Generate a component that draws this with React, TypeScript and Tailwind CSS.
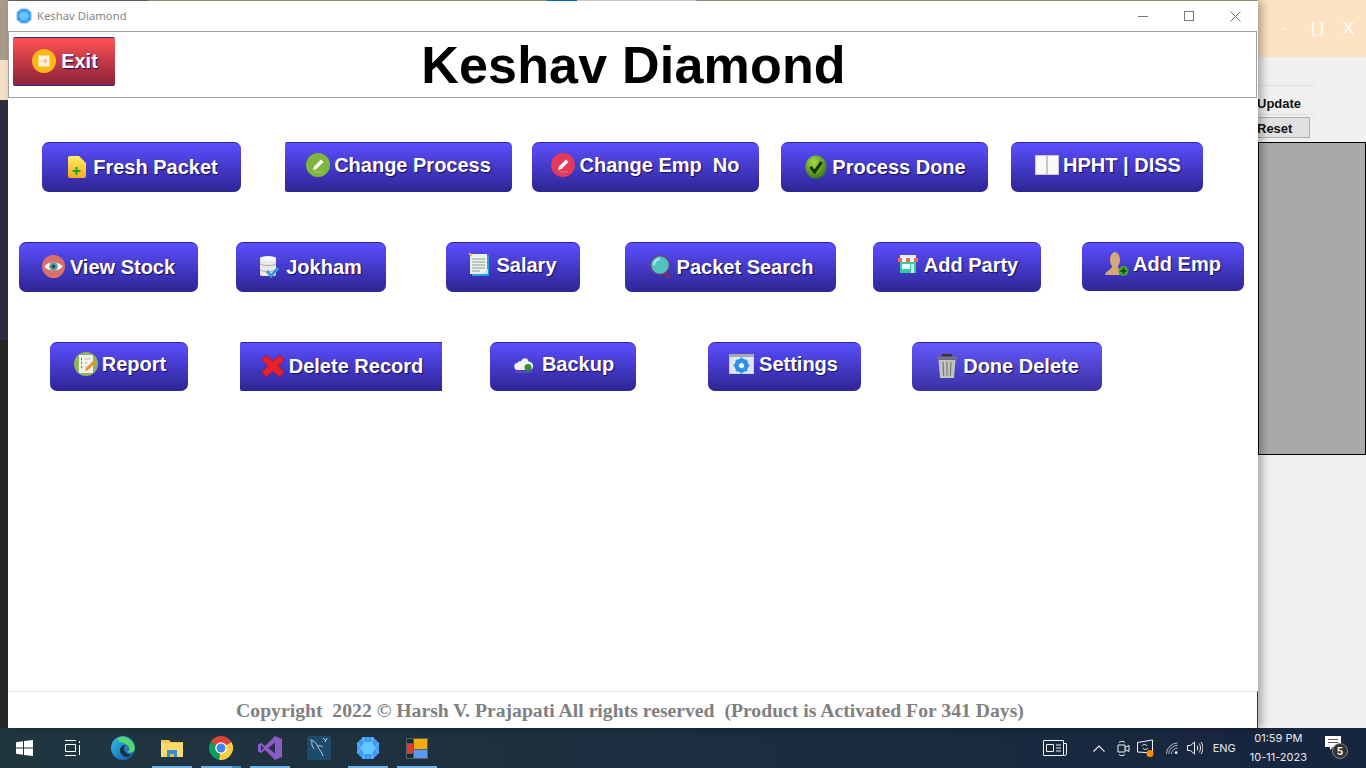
import type { ReactNode } from 'react';

const Diamond = ({ size = 16 }: { size?: number }) => (
  <svg width={size} height={size} viewBox="0 0 24 24">
    <polygon points="7,1 17,1 23,7 23,17 17,23 7,23 1,17 1,7" fill="#3f9bf5" />
    <polygon points="8,6 16,6 19,12 16,18 8,18 5,12" fill="#62c8ff" />
    <path d="M7 1 8 6M17 1l-1 5M23 7l-4 5M23 17l-4-5M17 23l-1-5M7 23l1-5M1 17l4-5M1 7l4 5" stroke="#8fc4fa" strokeWidth="0.8" />
  </svg>
);

const ExitIcon = () => (
  <svg width="24" height="24" viewBox="0 0 24 24">
    <circle cx="12" cy="12" r="12" fill="#fdb813" />
    <rect x="6.5" y="6.5" width="11" height="11" fill="#fdf3df" />
    <path d="M9 12h5M12.5 10l2 2-2 2" stroke="#e8bd72" strokeWidth="1.2" fill="none" />
  </svg>
);

const FileIcon = () => (
  <svg width="18" height="22" viewBox="0 0 18 22">
    <defs>
      <linearGradient id="fp" x1="0" y1="0" x2="0" y2="1">
        <stop offset="0" stopColor="#fff06a" />
        <stop offset="1" stopColor="#fba81e" />
      </linearGradient>
    </defs>
    <path d="M2 0h9l7 7v13a2 2 0 0 1-2 2H2a2 2 0 0 1-2-2V2a2 2 0 0 1 2-2z" fill="url(#fp)" />
    <path d="M4.500 15h8M8.500 11v8" stroke="#19a32a" strokeWidth="2" />
  </svg>
);

const PencilCircle = ({ bg, w, h }: { bg: string; w: number; h: number }) => (
  <svg width={w} height={h} viewBox="0 0 24 24" preserveAspectRatio="none">
    <circle cx="12" cy="12" r="12" fill={bg} />
    <path d="M7 17l1-3.500 7-7 2.500 2.500-7 7z" fill="#fff" />
    <path d="M8 19h9" stroke="#ffffff" strokeOpacity="0.4" strokeWidth="0.8" />
  </svg>
);

const CheckIcon = () => (
  <svg width="22" height="24" viewBox="0 0 24 24" preserveAspectRatio="none">
    <defs>
      <radialGradient id="ck" cx="0.4" cy="0.3" r="0.8">
        <stop offset="0" stopColor="#a5dc3c" />
        <stop offset="1" stopColor="#2f6d12" />
      </radialGradient>
    </defs>
    <circle cx="12" cy="12" r="11.500" fill="url(#ck)" />
    <path d="M6 12l4.500 5L18 7" stroke="#12300a" strokeWidth="3" fill="none" />
  </svg>
);

const BookIcon = () => (
  <svg width="24" height="20" viewBox="0 0 24 20">
    <rect width="24" height="20" fill="#c9c9c9" />
    <rect x="1" y="1" width="10" height="18" fill="#fafafa" />
    <rect x="13" y="1" width="10" height="18" fill="#fafafa" />
  </svg>
);

const EyeIcon = () => (
  <svg width="23" height="23" viewBox="0 0 24 24">
    <circle cx="12" cy="12" r="12" fill="#d9716a" />
    <path d="M2.500 12C6 6.500 18 6.500 21.500 12 18 17.500 6 17.500 2.500 12z" fill="#f4f7f7" />
    <circle cx="12" cy="12" r="4.500" fill="#5fa0a8" />
    <circle cx="12" cy="12" r="2" fill="#25474d" />
  </svg>
);

const DbIcon = () => (
  <svg width="19" height="22" viewBox="0 0 19 22">
    <rect x="0" y="1" width="16" height="19" rx="2" fill="#e9e9e9" />
    <ellipse cx="8" cy="2.500" rx="8" ry="2.500" fill="#fafafa" />
    <path d="M0 8c3 2 13 2 16 0M0 14c3 2 13 2 16 0" stroke="#a9a9a9" fill="none" />
    <path d="M7 15l4 5 7-8" stroke="#3c9dd8" strokeWidth="3" fill="none" />
  </svg>
);

const NoteIcon = () => (
  <svg width="20" height="23" viewBox="0 0 20 23">
    <rect x="3" y="2" width="17" height="21" fill="#2c9fe0" />
    <rect x="1" y="1" width="17" height="20" fill="#eef2ee" />
    <path d="M3 6h13M3 9h13M3 12h13M3 15h13M3 18h8" stroke="#8a9a8a" />
    <path d="M0 0l3 3" stroke="#e3c33a" strokeWidth="2" />
    <path d="M14 21l5-5v5z" fill="#bfe6fa" />
  </svg>
);

const SearchIcon = () => (
  <svg width="22" height="24" viewBox="0 0 22 24">
    <path d="M14 17l6 6" stroke="#7a2a5c" strokeWidth="3" />
    <circle cx="10" cy="10" r="9.300" fill="#4fc4c0" stroke="#7a3a66" strokeWidth="1.200" />
    <path d="M4 10a6 6 0 0 1 6-6" stroke="#b5ecea" strokeWidth="2" fill="none" />
  </svg>
);

const ShopIcon = () => (
  <svg width="20" height="21" viewBox="0 0 20 21">
    <rect x="2" y="7" width="16" height="12" fill="#37c9a4" />
    <rect x="4" y="10" width="8" height="5" fill="#eafff8" />
    <rect x="13" y="10" width="3" height="9" fill="#bdf1e2" />
    <rect x="2" y="1" width="16" height="3" fill="#e8f0ee" />
    <path d="M0 4h4v4H0z" fill="#ef6a62" />
    <path d="M4 4h4v4H4z" fill="#f7f7f7" />
    <path d="M8 4h4v4H8z" fill="#ef6a62" />
    <path d="M12 4h4v4h-4z" fill="#f7f7f7" />
    <path d="M16 4h4v4h-4z" fill="#ef6a62" />
  </svg>
);

const EmpIcon = () => (
  <svg width="24" height="26" viewBox="0 0 24 26">
    <path d="M0 24c1-5 7-5 7-9C4 12 4 2 10 1c6 1 6 11 3 14 0 3 2 4 4 5l-3 4z" fill="#d4a978" />
    <circle cx="18.500" cy="20" r="5" fill="#46a035" />
    <path d="M15.500 20h6M18.500 17v6" stroke="#0f3d12" strokeWidth="1.500" />
  </svg>
);

const ReportIcon = () => (
  <svg width="24" height="24" viewBox="0 0 24 24">
    <circle cx="12" cy="12" r="12" fill="#8eb55a" />
    <rect x="5" y="3" width="14" height="18" fill="#f2f2ec" />
    <path d="M7 7h1M7 11h1M7 15h1" stroke="#1c9ad6" strokeWidth="2.500" />
    <path d="M10.500 7h6M10.500 11h3M10.500 15h2" stroke="#b5b5b5" />
    <path d="M11 19l1-3 7-7 2 2-7 7z" fill="#f28c1e" />
  </svg>
);

const CrossIcon = () => (
  <svg width="24" height="24" viewBox="0 0 24 24">
    <path d="M5 1l7 6 7-6 4 5-6 6 6 6-4 5-7-6-7 6-4-5 6-6-6-6z" fill="#e8202a" stroke="#b8121c" strokeWidth="0.800" />
  </svg>
);

const CloudIcon = () => (
  <svg width="20" height="19" viewBox="0 0 20 19">
    <path d="M4 15a3.500 3.500 0 0 1-.500-7C4 6 6 6 7 6.500 8 2 14 2 14.500 6.500 17.500 6.500 19.500 9 19 12c-.300 2-2 3-3 3z" fill="#f2f2f2" />
    <circle cx="14" cy="12.500" r="3.500" fill="#3b8a3e" />
    <path d="M1 17h17" stroke="#6a6a9a" />
  </svg>
);

const SettingsIcon = () => (
  <svg width="25" height="20" viewBox="0 0 25 20">
    <rect width="25" height="20" fill="#cfd3d8" />
    <rect y="0" width="25" height="3" fill="#a5a8ad" />
    <rect x="1" y="3" width="23" height="16" fill="#dfe8f2" />
    <circle cx="12.500" cy="11.500" r="5" fill="none" stroke="#2f8fe6" strokeWidth="4" />
    <path d="M12.500 3.500v16M4.500 11.500h16M7 6l11 11M18 6L7 17" stroke="#2f8fe6" strokeWidth="2" />
    <circle cx="12.500" cy="11.500" r="2.500" fill="#fff" />
  </svg>
);

const TrashIcon = () => (
  <svg width="22" height="24" viewBox="0 0 22 24">
    <rect x="6" y="0" width="10" height="3" fill="#333" />
    <rect x="1" y="2.500" width="20" height="3" rx="1" fill="#777" />
    <path d="M2.500 6h17L18 24H4z" fill="#c3c3bd" />
    <path d="M7 8l.7 14M11 8v14M15 8l-.7 14" stroke="#777" strokeWidth="1.200" />
  </svg>
);

type Btn = {
  label: string;
  icon: ReactNode;
  ml: string;
  w: string;
  shift?: string;
  gap?: string;
  corners?: string;
  bg?: string;
};

const rowOne: Btn[] = [
  { label: 'Fresh Packet', icon: <FileIcon />, ml: 'ml-[34px]', w: 'w-[199px]', gap: 'gap-[7px]', shift: 'pb-[2px] pl-[3px]' },
  { label: 'Change Process', icon: <PencilCircle bg="#7fb63c" w={24} h={24} />, ml: 'ml-[44px]', w: 'w-[227px]', gap: 'gap-1', shift: 'pb-[6px]', corners: 'rounded-l-[2px] rounded-r-[5px]' },
  { label: 'Change Emp  No', icon: <PencilCircle bg="#e33a5c" w={24} h={24} />, ml: 'ml-[20px]', w: 'w-[227px]', gap: 'gap-1', shift: 'pb-[6px]' },
  { label: 'Process Done', icon: <CheckIcon />, ml: 'ml-[22px]', w: 'w-[207px]', gap: 'gap-[5px]', shift: 'pb-[2px] pl-[2px]' },
  { label: 'HPHT | DISS', icon: <BookIcon />, ml: 'ml-[23px]', w: 'w-[192px]', gap: 'gap-1', shift: 'pb-[6px] pl-[2px]' },
];

const rowTwo: Btn[] = [
  { label: 'View Stock', icon: <EyeIcon />, ml: 'ml-[11px]', w: 'w-[179px]', gap: 'gap-[5px]', shift: 'pb-[2px]' },
  { label: 'Jokham', icon: <DbIcon />, ml: 'ml-[38px]', w: 'w-[150px]', gap: 'gap-[7px]', shift: 'pb-[2px]' },
  { label: 'Salary', icon: <NoteIcon />, ml: 'ml-[60px]', w: 'w-[134px]', gap: 'gap-[7px]', shift: 'pb-[6px]' },
  { label: 'Packet Search', icon: <SearchIcon />, ml: 'ml-[45px]', w: 'w-[211px]', gap: 'gap-[5px]', shift: 'pb-[2px] pl-[2px]' },
  { label: 'Add Party', icon: <ShopIcon />, ml: 'ml-[37px]', w: 'w-[168px]', gap: 'gap-[6px]', shift: 'pb-[6px] pl-[2px]' },
  { label: 'Add Emp', icon: <EmpIcon />, ml: 'ml-[41px]', w: 'w-[162px]', gap: 'gap-1', shift: 'pb-[7px]' },
];

const rowThree: Btn[] = [
  { label: 'Report', icon: <ReportIcon />, ml: 'ml-[42px]', w: 'w-[138px]', gap: 'gap-1', shift: 'pb-[6px] pl-[2px]' },
  { label: 'Delete Record', icon: <CrossIcon />, ml: 'ml-[52px]', w: 'w-[202px]', gap: 'gap-1', shift: 'pb-[2px] pl-[2px]', corners: 'rounded-l-[2px] rounded-r-none' },
  { label: 'Backup', icon: <CloudIcon />, ml: 'ml-[48px]', w: 'w-[146px]', gap: 'gap-2', shift: 'pb-[6px] pl-[2px]' },
  { label: 'Settings', icon: <SettingsIcon />, ml: 'ml-[72px]', w: 'w-[153px]', gap: 'gap-[5px]', shift: 'pb-[6px] pr-[2px]' },
  { label: 'Done Delete', icon: <TrashIcon />, ml: 'ml-[51px]', w: 'w-[190px]', gap: 'gap-[5px]', shift: 'pb-[2px] pl-[1px]', bg: 'from-[#6459ff] to-[#3a30a0]' },
];

const MenuButton = ({ b, h }: { b: Btn; h: string }) => (
  <button
    className={`flex shrink-0 items-center justify-center border-t border-[#2b2391] bg-gradient-to-b text-[20px] font-bold whitespace-pre text-white [text-shadow:1px_1px_1px_#17105c] ${b.ml} ${b.w} ${h} ${b.gap ?? 'gap-1'} ${b.shift ?? ''} ${b.corners ?? 'rounded-[7px]'} ${b.bg ?? 'from-[#5a4fff] to-[#2f2594]'}`}
  >
    {b.icon}
    <span>{b.label}</span>
  </button>
);

const Underline = ({ wide }: { wide?: boolean }) => (
  <div className="absolute bottom-0 left-[5px] flex h-[2px] w-[40px]">
    <div className="h-full flex-1 bg-[#6cb2e4]" />
    {wide && <div className="h-full w-[9px] bg-[#4a86b8]" />}
  </div>
);

const TaskItem = ({ children, on, wide }: { children: ReactNode; on?: boolean; wide?: boolean }) => (
  <div className="relative flex h-full w-[49px] items-center justify-center">
    {children}
    {on && <Underline wide={wide} />}
  </div>
);

export default function App() {
  return (
    <div className="flex h-[768px] w-[1366px] flex-col overflow-hidden bg-[#f0f0f0] font-['Liberation_Sans',Arial,sans-serif]">
      <div className="relative h-[728px] shrink-0">
        {/* desktop behind the main window */}
        <div className="absolute top-0 left-0 flex h-full w-2 flex-col">
          <div className="h-[60px] bg-[#a99b89]" />
          <div className="h-[40px] bg-[#f3dec6]" />
          <div className="h-[240px] bg-[#2c2d41]" />
          <div className="flex-1 bg-[#25252a]" />
        </div>
        <div className="absolute top-0 left-[8px] flex h-px w-[1250px]">
          <div className="w-[140px] bg-[#6f675c]" />
          <div className="w-[399px] bg-[#a99b89]" />
          <div className="w-[30px] bg-[#0078d7]" />
          <div className="w-[119px] bg-[#e6e6e6]" />
          <div className="flex-1 bg-[#a99b89]" />
        </div>

        {/* window behind, on the right */}
        <div className="absolute top-0 right-0 flex h-full w-[108px] flex-col bg-[#f0f0f0]">
          <div className="flex h-[57px] items-center justify-end bg-[#fde3c4] pr-[12px] text-[15px] text-white">
            <span>-</span>
            <span className="ml-[24px]">[ ]</span>
            <span className="ml-[19px] text-[17px]">X</span>
          </div>
          <div className="mt-[28px] h-px w-[57px] bg-[#e0e0e0]" />
          <div className="-ml-px flex h-[28px] items-center pt-[7px] text-[13px] font-bold text-[#101010]">Update</div>
          <div className="h-px w-[57px] bg-[#e0e0e0]" />
          <div className="mt-[2px] flex h-[21px] w-[52px] items-center border border-l-0 border-[#b0b0b0] bg-[#e1e1e1] pt-[2px] text-[13px] font-bold text-[#101010]">
            <span className="-ml-px">Reset</span>
          </div>
          <div className="mt-[4px] h-[313px] border border-black bg-[#a9a9a9]" />
        </div>

        {/* main window */}
        <div className="absolute top-px left-[8px] flex h-[727px] w-[1250px] flex-col bg-white shadow-[4px_0_8px_rgba(0,0,0,0.3)]">
          <div className="flex h-[30px] shrink-0 items-center pl-[8px]">
            <Diamond />
            <span className="ml-[5px] font-['Noto_Sans',sans-serif] text-[11.3px] text-[#8a8488]">Keshav Diamond</span>
            <div className="ml-auto flex items-center">
              <div className="flex w-[46px] justify-center">
                <div className="h-px w-[10px] bg-[#777777]" />
              </div>
              <div className="flex w-[46px] justify-center">
                <div className="h-[10px] w-[10px] border border-[#777777]" />
              </div>
              <div className="flex w-[46px] justify-center">
                <svg width="11" height="11" viewBox="0 0 11 11">
                  <path d="M0.500 0.500l10 10M10.500 0.500l-10 10" stroke="#777777" />
                </svg>
              </div>
            </div>
          </div>

          <div className="relative mr-[1px] flex h-[67px] shrink-0 items-center justify-center border border-[#a0a0a0] pl-[2px]">
            <button className="absolute top-[5px] left-[4px] flex h-[49px] w-[102px] items-center justify-center gap-[5px] rounded-[2px] border-y border-[#2e2a8a] bg-gradient-to-b from-[#ff5252] to-[#8c2238] pb-[2px] pl-[2px] text-[20px] font-bold text-white [text-shadow:1px_1px_1px_#17105c]">
              <ExitIcon />
              Exit
            </button>
            <h1 className="text-[52px] leading-none font-bold tracking-[0.2px] text-black">Keshav Diamond</h1>
          </div>

          <div className="flex flex-1 flex-col">
            <div className="mt-[44px] flex">
              {rowOne.map((b) => (
                <MenuButton key={b.label} b={b} h="h-[50px]" />
              ))}
            </div>
            <div className="mt-[50px] flex items-start">
              {rowTwo.map((b) => (
                <MenuButton key={b.label} b={b} h={b.label === 'Add Emp' ? 'h-[49px]' : 'h-[50px]'} />
              ))}
            </div>
            <div className="mt-[50px] flex">
              {rowThree.map((b) => (
                <MenuButton key={b.label} b={b} h="h-[49px]" />
              ))}
            </div>
          </div>

          <div className="flex h-[37px] shrink-0 items-center justify-center border-t border-r border-t-[#e4e4e4] border-r-[#333333] pt-[2px] pr-[5px] font-['Liberation_Serif',serif] text-[19.7px] font-bold whitespace-pre text-[#808080]">
            Copyright  2022 © Harsh V. Prajapati All rights reserved  (Product is Activated For 341 Days)
          </div>
        </div>
      </div>

      {/* taskbar */}
      <div className="flex h-10 shrink-0 items-center bg-gradient-to-r from-[#20363f] to-[#17253f] text-[#e8e8e8]">
        <div className="flex h-full w-12 items-center justify-center">
          <svg width="17" height="16" viewBox="0 0 17 16">
            <path d="M0 2.300 7 1.300V7.500H0zM8 1.100 17 0V7.500H8zM0 8.500H7V14.700L0 13.700zM8 8.500H17V16L8 14.900z" fill="#ffffff" />
          </svg>
        </div>
        <div className="flex h-full w-[50px] items-center justify-center">
          <svg width="17" height="16" viewBox="0 0 17 16" fill="none" stroke="#ffffff">
            <path d="M0 .5h11M0 15.500h11M.5 4.500h10v7H.5zM14.500 1v2M14.500 5v10" strokeWidth="1" />
          </svg>
        </div>
        <TaskItem>
          <svg width="24" height="24" viewBox="0 0 24 24">
            <defs>
              <linearGradient id="edge" x1="0" y1="0" x2="1" y2="1">
                <stop offset="0" stopColor="#35c1f1" />
                <stop offset="1" stopColor="#0b4f9e" />
              </linearGradient>
            </defs>
            <circle cx="12" cy="12" r="12" fill="url(#edge)" />
            <path d="M6 3C12-2 23 3 24 12c0 4-5 6-8 4 3-1 3-5 0-7C12 6 7 6 6 3z" fill="#58d66a" />
            <path d="M9 14c0-3 3-5 6-5-4 2-2 9 5 10-4 4-11 1-11-5z" fill="#1f2f40" />
          </svg>
        </TaskItem>
        <TaskItem on>
          <svg width="22" height="18" viewBox="0 0 22 18">
            <path d="M0 1h8l2 2h12v15H0z" fill="#f5c84c" />
            <rect x="0" y="4" width="22" height="14" fill="#fbd96e" />
            <path d="M6 18v-7h10v7h-3v-3H9v3z" fill="#2f8fd8" />
            <rect x="9" y="15" width="4" height="3" fill="#f2b632" />
          </svg>
        </TaskItem>
        <TaskItem on wide>
          <svg width="24" height="24" viewBox="0 0 24 24">
            <path d="M12 12 1.600 6A12 12 0 0 1 22.400 6z" fill="#db4437" />
            <path d="M12 12l-10.400-6A12 12 0 0 0 10 23.800z" fill="#0f9d58" />
            <path d="M12 12 22.400 6A12 12 0 0 1 10 23.800z" fill="#ffcd40" />
            <circle cx="12" cy="12" r="5.800" fill="#ffffff" />
            <circle cx="12" cy="12" r="4.500" fill="#4285f4" />
          </svg>
        </TaskItem>
        <TaskItem on>
          <svg width="24" height="24" viewBox="0 0 24 24">
            <path d="M17 0 24 3v18l-7 3-10-10-4 3-3-1.500v-7L3 7l4 3z" fill="#8a5cc9" />
            <path d="M17 6.500v11L10 12z" fill="#2a2f50" />
            <path d="M3 9v6l3-3z" fill="#2a2f50" />
          </svg>
        </TaskItem>
        <TaskItem>
          <svg width="24" height="24" viewBox="0 0 24 24">
            <rect width="24" height="24" rx="3" fill="#1e4a6e" />
            <path d="M3 4c4 0 6 3 8 7s4 5 5 9M5 5c-1 4 1 6 2 8M11 10c2-1 3 0 5 1M16 2l3 3M20 2l-2 4" stroke="#cfe0ea" strokeWidth="0.900" fill="none" />
          </svg>
        </TaskItem>
        <TaskItem on>
          <Diamond size={24} />
        </TaskItem>
        <TaskItem on>
          <svg width="22" height="21" viewBox="0 0 22 21">
            <rect width="22" height="21" fill="#5a5f66" />
            <rect x="1" y="1" width="6" height="4" fill="#1b2a34" />
            <rect x="8" y="1" width="13" height="10" fill="#f0ac0c" />
            <rect x="1" y="6" width="6" height="9" fill="#e23a2e" />
            <rect x="8" y="12" width="13" height="8" fill="#5b9bea" />
            <rect x="1" y="16" width="6" height="4" fill="#1b2a34" />
          </svg>
        </TaskItem>

        <div className="ml-auto flex h-full items-center">
          <svg className="mr-[26px]" width="24" height="16" viewBox="0 0 24 16" fill="none" stroke="#f2f2f2">
            <path d="M.5.500h20v15H.5zM20.500 3.500h3v10a2 2 0 0 1-2 2h-1M3.500 4.500h7v7h-7zM13 5h5M13 8h5M13 11h5" />
          </svg>
          <svg className="mr-[12px]" width="12" height="7" viewBox="0 0 12 7" fill="none" stroke="#f2f2f2">
            <path d="M.5 6.500 6 1l5.500 5.500" strokeWidth="1.200" />
          </svg>
          <svg className="mr-[7px]" width="13" height="17" viewBox="0 0 13 17" fill="none" stroke="#f2f2f2">
            <path d="M1 5h7v7H1zM8 7.500l4-2v6l-4-2M2 2.500c2-1.500 4-1.500 6 0M2 14.500c2 1.500 4 1.500 6 0" />
          </svg>
          <svg className="mr-[11px]" width="18" height="19" viewBox="0 0 18 19" fill="none" stroke="#f2f2f2">
            <path d="M.5 3.500l15-2.500v13l-15-1zM5 7c1-2 4-2 5 0M11 9c-1 2-4 2-5 0" />
            <circle cx="13" cy="14.500" r="3.500" fill="#ff8c00" stroke="none" />
          </svg>
          <svg className="mr-[9px]" width="12" height="13" viewBox="0 0 13 13" fill="none" stroke="#b9c2c9">
            <path d="M.5 12.500a12 12 0 0 1 12-12M3 12.500a9.500 9.500 0 0 1 9.500-9.500M6 12.500a6.500 6.500 0 0 1 6.500-6.500" />
            <circle cx="11" cy="11" r="1.500" fill="#f2f2f2" stroke="none" />
          </svg>
          <svg className="mr-[10px]" width="16" height="14" viewBox="0 0 16 14" fill="none" stroke="#f2f2f2">
            <path d="M.5 4.500h3L7.500 1v12l-4-3.500h-3zM10 4.500c1 1.500 1 3.500 0 5M12 2.500c2 2.500 2 6.500 0 9M14 1c2.500 3 2.500 9 0 12" />
          </svg>
          <span className="mr-[14px] font-['Inter',sans-serif] text-[11px]">ENG</span>
          <div className="mr-[18px] flex flex-col items-center font-['Inter',sans-serif] text-[11px]">
            <span className="h-[19px] leading-[19px]">01:59 PM</span>
            <span className="h-[19px] leading-[19px]">10-11-2023</span>
          </div>
          <div className="relative mr-[18px] h-[24px] w-[23px]">
            <svg width="17" height="15" viewBox="0 0 17 15">
              <path d="M0 0h16v11H8l-3 3v-3H0z" fill="#ffffff" />
              <path d="M3 3.500h10M3 6.500h10" stroke="#555" />
            </svg>
            <span className="absolute top-[7px] left-[7px] flex h-[16px] w-[16px] items-center justify-center rounded-full border border-[#888888] bg-[#333333] font-['Inter',sans-serif] text-[10px] font-bold text-white">
              5
            </span>
          </div>
        </div>
      </div>
    </div>
  );
}
